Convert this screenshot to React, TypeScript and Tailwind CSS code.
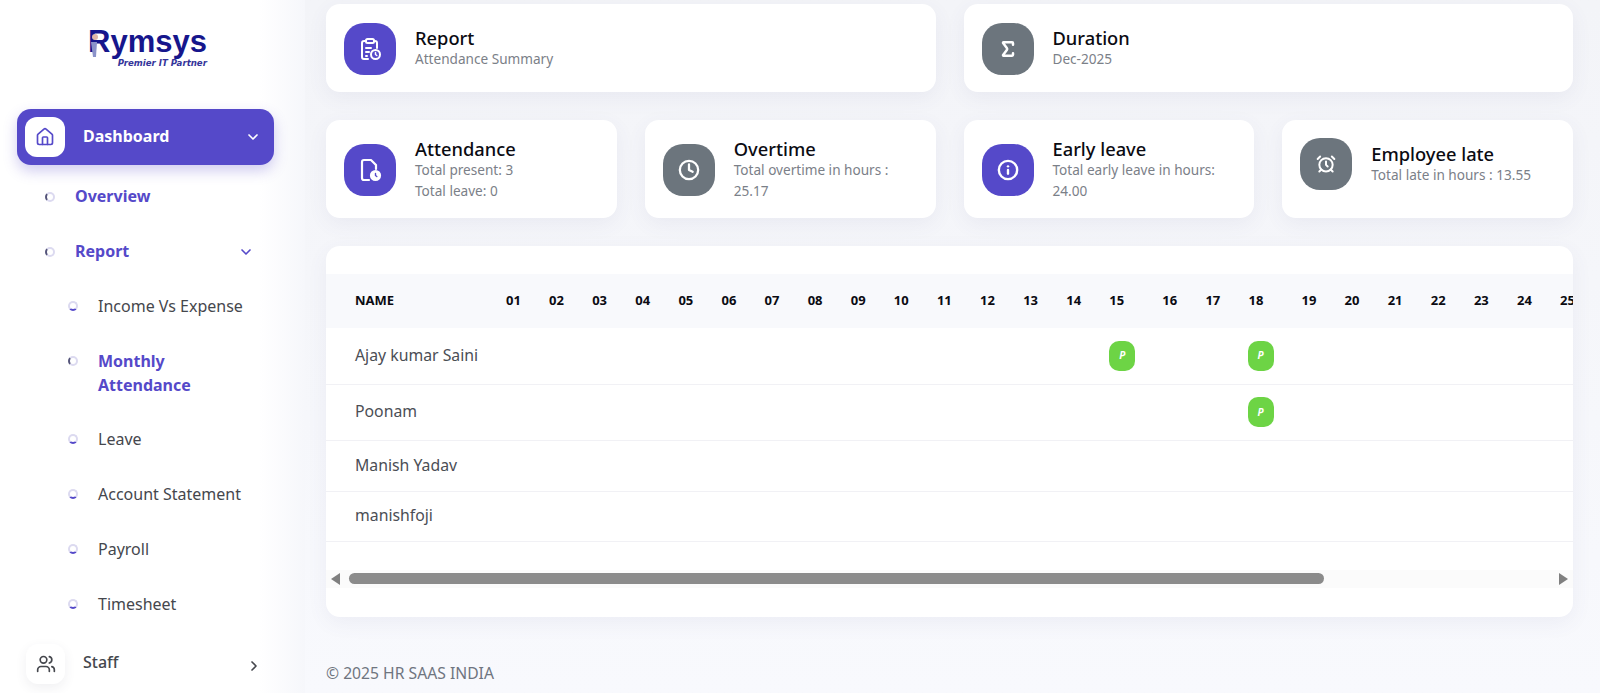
import { AlarmClock, ChevronDown, ChevronRight, Clock, House, Info, Sigma, Users } from "lucide-react";
import type { ReactNode } from "react";

const INDIGO = "bg-[#5549c9]";
const SLATE = "bg-[#6c757d]";

function ReportIcon() {
  return (
    <svg width="24" height="24" viewBox="0 0 24 24" fill="none" stroke="currentColor" strokeWidth="2" strokeLinecap="round" strokeLinejoin="round">
      <path d="M10 22H6a2 2 0 0 1-2-2V6a2 2 0 0 1 2-2h2" />
      <path d="M16 4h1a2 2 0 0 1 2 2v5" />
      <rect x="8" y="2" width="8" height="4" rx="1.5" />
      <path d="M8 11h5M8 15h3M8 19h1" />
      <circle cx="17.5" cy="17.5" r="4.5" />
      <path d="M17.5 15.5v2l1.3 1" strokeWidth="1.5" />
    </svg>
  );
}

function FileClockIcon() {
  return (
    <svg width="24" height="24" viewBox="0 0 24 24" fill="none" stroke="currentColor" strokeWidth="2.2" strokeLinecap="round" strokeLinejoin="round">
      <path d="M11 22H6a2 2 0 0 1-2-2V4a2 2 0 0 1 2-2h7l5 5v4" />
      <circle cx="17.5" cy="17.5" r="4.5" fill="currentColor" />
      <path d="M17.5 15.5v2l1.3 1" strokeWidth="1.4" stroke="#5549c9" />
    </svg>
  );
}

function StatCard({ tone, icon, title, lines, lift }: { tone: string; icon: ReactNode; title: string; lines: string[]; lift?: boolean }) {
  return (
    <div className="flex items-center gap-[19px] rounded-[14px] bg-white px-[18px] pt-[19px] pb-[17px] shadow-[0_6px_20px_rgba(90,90,140,0.07)]">
      <div className={`flex h-[52px] w-[52px] shrink-0 items-center justify-center rounded-[20px] text-white ${tone}`}>{icon}</div>
      <div className={`min-w-0 ${lift ? "mb-[2px]" : ""}`}>
        <div className="text-[18.3px] leading-[20px] font-medium text-[#0b0b12]">{title}</div>
        {lines.map((line) => (
          <div key={line} className="text-[13.6px] leading-[21px] text-[#7b8088]">{line}</div>
        ))}
      </div>
    </div>
  );
}

function Dot({ active, className }: { active?: boolean; className?: string }) {
  return (
    <span
      className={`h-[10px] w-[10px] shrink-0 rounded-full border-2 border-[#dcdaf0] ${active ? "border-l-[#55557a]" : "border-b-[#5549c9]"} ${className ?? ""}`}
    />
  );
}

function SubItem({ label, active }: { label: string; active?: boolean }) {
  return (
    <div className="flex items-start pl-[68px]">
      <Dot active={active} className="mt-[7px]" />
      <span className={`ml-[20px] w-[150px] text-[16px] ${active ? "leading-[24px] font-bold text-[#5549c9]" : "leading-[25px] text-[#45474d]"}`}>{label}</span>
    </div>
  );
}

const days = Array.from({ length: 25 }, (_, i) => i + 1);
const rows = [
  { name: "Ajay kumar Saini", present: [15, 18], height: "h-[56px]" },
  { name: "Poonam", present: [18], height: "h-[56px]" },
  { name: "Manish Yadav", present: [], height: "h-[51px]" },
  { name: "manishfoji", present: [], height: "h-[50px]" },
];

export default function App() {
  return (
    <div className="flex h-[693px] w-[1600px] overflow-hidden bg-gradient-to-b from-[#f3f4f8] to-[#f8f9fd] font-['Noto_Sans','Open_Sans',sans-serif]">
      <aside className="relative w-[305px] shrink-0 bg-gradient-to-r from-white via-white via-85% to-[#f6f7fb]">
        <div className="flex h-[109px] flex-col items-center pr-[10px] pt-[26px]">
          <div className="relative flex flex-col items-end">
            <span className="font-['Liberation_Sans',sans-serif] text-[31px] leading-[32px] font-bold text-[#16168c]">Rymsys</span>
            <span className="font-['DejaVu_Sans',sans-serif] text-[8.6px] leading-[11px] font-bold italic text-[#34349a]">Premier IT Partner</span>
            <svg className="absolute left-[1px] top-[7px]" width="10" height="26" viewBox="0 0 10 26">
              <circle cx="6" cy="4" r="3" fill="#e0b7a8" />
              <path d="M2 9h6l-1 15H4z" fill="#8b93c9" />
            </svg>
          </div>
        </div>

        <div className="ml-[17px] mr-[31px] flex h-[56px] items-center rounded-[14px] bg-[#5549c9] pl-[8px] pr-[13px] shadow-[0_6px_14px_rgba(85,73,201,0.28)]">
          <div className="flex h-[40px] w-[40px] items-center justify-center rounded-[12px] bg-white text-[#5549c9]">
            <House size={20} />
          </div>
          <span className="mb-[3px] ml-[18px] flex-1 text-[16px] font-bold text-white">Dashboard</span>
          <ChevronDown size={16} strokeWidth={2.5} className="text-white" />
        </div>

        <div className="mt-[19px] flex items-center pl-[45px]">
          <Dot active className="mr-[20px]" />
          <span className="text-[16px] leading-[25px] font-bold text-[#5549c9]">Overview</span>
        </div>
        <div className="mt-[30px] flex items-center pl-[45px] pr-[51px]">
          <Dot active className="mr-[20px]" />
          <span className="flex-1 text-[16px] leading-[25px] font-bold text-[#5549c9]">Report</span>
          <ChevronDown size={16} strokeWidth={2.5} className="text-[#5549c9]" />
        </div>

        <div className="mt-[30px] flex flex-col gap-[30px]">
          <SubItem label="Income Vs Expense" />
          <SubItem label="Monthly Attendance" active />
          <SubItem label="Leave" />
          <SubItem label="Account Statement" />
          <SubItem label="Payroll" />
          <SubItem label="Timesheet" />
        </div>

        <div className="mt-[27px] flex items-center pl-[26px] pr-[43px]">
          <div className="flex h-[40px] w-[39px] items-center justify-center rounded-[12px] bg-white text-[#45474d] shadow-[0_4px_12px_rgba(60,60,90,0.08)]">
            <Users size={20} />
          </div>
          <span className="mb-[4px] ml-[18px] flex-1 text-[16px] font-medium text-[#45474d]">Staff</span>
          <ChevronRight size={16} strokeWidth={2.5} className="mt-[3px] text-[#45474d]" />
        </div>
      </aside>

      <main className="min-w-0 flex-1 pl-[21px] pr-[27px] pt-[4px]">
        <div className="grid grid-cols-2 gap-[28px]">
          <StatCard lift tone={INDIGO} icon={<ReportIcon />} title="Report" lines={["Attendance Summary"]} />
          <StatCard lift tone={SLATE} icon={<Sigma size={20} strokeWidth={3} />} title="Duration" lines={["Dec-2025"]} />
        </div>

        <div className="mt-[28px] grid grid-cols-4 gap-[28px]">
          <StatCard tone={INDIGO} icon={<FileClockIcon />} title="Attendance" lines={["Total present: 3", "Total leave: 0"]} />
          <StatCard tone={SLATE} icon={<Clock size={22} strokeWidth={2.5} />} title="Overtime" lines={["Total overtime in hours :", "25.17"]} />
          <StatCard tone={INDIGO} icon={<Info size={22} strokeWidth={2.6} />} title="Early leave" lines={["Total early leave in hours:", "24.00"]} />
          <div className="flex items-start gap-[19px] rounded-[14px] bg-white px-[18px] py-[18px] shadow-[0_6px_20px_rgba(90,90,140,0.07)]">
            <div className={`flex h-[52px] w-[52px] shrink-0 items-center justify-center rounded-[20px] text-white ${SLATE}`}>
              <AlarmClock size={20} strokeWidth={2.4} />
            </div>
            <div className="pt-[6px]">
              <div className="text-[18.3px] leading-[20px] font-medium text-[#0b0b12]">Employee late</div>
              <div className="text-[13.6px] leading-[21px] text-[#7b8088]">Total late in hours : 13.55</div>
            </div>
          </div>
        </div>

        <div className="mt-[28px] overflow-hidden rounded-[14px] bg-white pt-[28px] pb-[29px] shadow-[0_6px_20px_rgba(90,90,140,0.07)]">
          <div className="overflow-hidden">
            <table className="w-[1277px] table-fixed border-collapse">
              <colgroup>
                <col className="w-[180px]" />
                {days.map((day) => (
                  <col key={day} className={day === 15 || day === 18 ? "w-[53px]" : "w-[43.1px]"} />
                ))}
              </colgroup>
              <thead>
                <tr className="h-[54px] bg-[#f8f9fc]">
                  <th className="pl-[29px] text-left text-[13px] font-bold text-[#0b0b12]">NAME</th>
                  {days.map((day) => (
                    <th key={day} className="text-left text-[13px] font-bold text-[#0b0b12]">{String(day).padStart(2, "0")}</th>
                  ))}
                </tr>
              </thead>
              <tbody>
                {rows.map((row) => (
                  <tr key={row.name} className={`border-b border-[#f1f1f5] ${row.height}`}>
                    <td className="pl-[29px] text-[15.8px] text-[#4b4e55]">{row.name}</td>
                    {days.map((day) => (
                      <td key={day}>
                        {row.present.includes(day) && (
                          <span className={`flex h-[30px] w-[26px] items-center justify-center rounded-[10px] bg-[#6dd445] text-[10px] font-bold italic text-white ${day === 15 ? "" : "-ml-[1px]"}`}>P</span>
                        )}
                      </td>
                    ))}
                  </tr>
                ))}
              </tbody>
            </table>
          </div>

          <div className="mt-[28px] flex h-[18px] items-center bg-[#fbfbfb] pl-[5px] pr-[5px]">
            <svg width="9" height="12" viewBox="0 0 9 12" className="shrink-0"><path d="M9 0v12L0 6z" fill="#7f7f7f" /></svg>
            <div className="ml-[9px] h-[11px] w-[975px] rounded-full bg-[#8b8b8b]" />
            <div className="flex-1" />
            <svg width="9" height="12" viewBox="0 0 9 12" className="shrink-0"><path d="M0 0v12l9-6z" fill="#7f7f7f" /></svg>
          </div>
        </div>

        <div className="mt-[44px] text-[15.7px] leading-[24px] text-[#6f7580]">© 2025 HR SAAS INDIA</div>
      </main>
    </div>
  );
}
